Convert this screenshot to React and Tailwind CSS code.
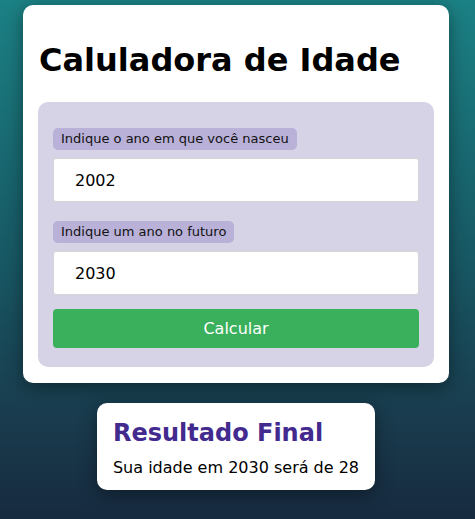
import React, { useState } from "react";

const App = () => {
    const [nascimento, setNascimento] = useState("2002");
    const [futuro, setFuturo] = useState("2030");
    const [resultado, setResultado] = useState({ ano: 2030, idade: 28 });

    const calcular = () => {
        setResultado({ ano: Number(futuro), idade: Number(futuro) - Number(nascimento) });
    };

    return (
        <div
            className="min-h-[519px] w-full bg-gradient-to-b from-[#1b8184] via-[#175864] to-[#172a3f] pt-[5px] pr-[3px] pb-[30px] flex flex-col items-center"
            style={{ fontFamily: '"DejaVu Sans", Verdana, sans-serif' }}
        >
            <div className="w-[426px] bg-white rounded-[10px] px-[15px] pt-[16px] pb-[16px] shadow-[0_4px_18px_rgba(0,0,0,0.4)]">
                <h1 className="text-[32px] font-bold text-black leading-[37px] mt-[21px] mb-[23px] pl-px">
                    Caluladora de Idade
                </h1>

                <div className="bg-[#d7d3e7] rounded-[10px] px-[15px] pt-[24px] pb-[19px]">
                    <label className="inline-block bg-[#b9b1d8] rounded-[5px] px-2 py-[3px] text-[13px] leading-[16px] text-[#111]">
                        Indique o ano em que você nasceu
                    </label>
                    <input
                        value={nascimento}
                        onChange={(e) => setNascimento(e.target.value)}
                        className="block w-full h-[44px] mt-2 bg-white border border-[#d4d4d4] rounded-[3px] pl-[21px] text-[16px] text-black outline-none"
                    />

                    <label className="inline-block mt-[19px] bg-[#b9b1d8] rounded-[5px] px-2 py-[3px] text-[13px] leading-[16px] text-[#111]">
                        Indique um ano no futuro
                    </label>
                    <input
                        value={futuro}
                        onChange={(e) => setFuturo(e.target.value)}
                        className="block w-full h-[44px] mt-2 bg-white border border-[#d4d4d4] rounded-[3px] pl-[21px] text-[16px] text-black outline-none"
                    />

                    <button
                        onClick={calcular}
                        className="block w-full h-[39px] mt-[14px] bg-[#3ab05c] rounded-[4px] text-white text-[16px]"
                    >
                        Calcular
                    </button>
                </div>
            </div>

            <div className="mt-[20px] bg-white rounded-[10px] px-4 pt-[16px] pb-[13px] shadow-[0_4px_18px_rgba(0,0,0,0.4)]">
                <h2 className="text-[24px] font-bold text-[#432a8e] leading-[28px] mb-[11px]">
                    Resultado Final
                </h2>
                <p className="text-[16px] leading-[19px] text-black">
                    Sua idade em {resultado.ano} será de {resultado.idade}
                </p>
            </div>
        </div>
    );
};

export default App;
